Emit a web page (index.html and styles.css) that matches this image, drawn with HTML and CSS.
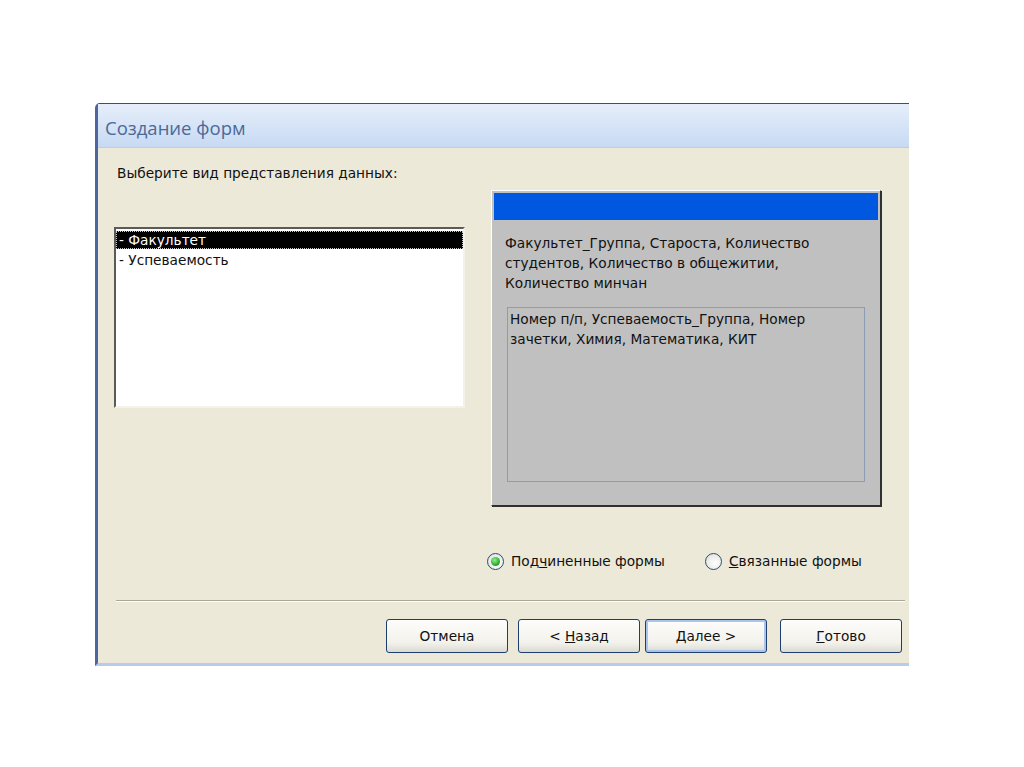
FILE: index.html
```html
<!DOCTYPE html>
<html lang="ru">
<head>
    <meta charset="UTF-8">
    <title>Создание форм</title>
    <link rel="stylesheet" href="styles.css">
</head>
<body>
    <div class="window">
        <div class="titlebar">Создание форм</div>
        <div class="dialog">
            <p class="prompt">Выберите вид представления данных:</p>

            <div class="content">
                <div class="listbox">
                    <div class="list-item selected">- Факультет</div>
                    <div class="list-item">- Успеваемость</div>
                </div>

                <div class="preview">
                    <div class="preview-bar"></div>
                    <p class="preview-main">Факультет_Группа, Староста, Количество студентов, Количество в общежитии, Количество минчан</p>
                    <div class="preview-sub">Номер п/п, Успеваемость_Группа, Номер зачетки, Химия, Математика, КИТ</div>
                </div>
            </div>

            <div class="options">
                <label class="radio checked"><span class="dot"></span>Под<u>ч</u>иненные формы</label>
                <label class="radio"><span class="dot"></span><u>С</u>вязанные формы</label>
            </div>

            <div class="separator"></div>

            <div class="buttons">
                <button class="btn">Отмена</button>
                <button class="btn">&lt; <u>Н</u>азад</button>
                <button class="btn default"><u>Д</u>алее &gt;</button>
                <button class="btn"><u>Г</u>отово</button>
            </div>
        </div>
    </div>
</body>
</html>
```

FILE: styles.css
```css
body {
    margin: 0;
    background: #ffffff;
    font-family: "DejaVu Sans", Tahoma, sans-serif;
    font-size: 13.7px;
    color: #111;
}

.window {
    margin: 103px 0 0 95px;
    width: 811px;
    border-left: 3px solid #4d66a0;
    border-top: 1px solid #3b4d78;
    border-bottom: 3px solid #b7cbea;
    border-top-left-radius: 5px;
    background: #ece9d8;
}

.titlebar {
    height: 43px;
    padding-left: 7px;
    line-height: 48px;
    font-family: "Open Sans", "DejaVu Sans", sans-serif;
    font-size: 18.5px;
    color: #4b6a98;
    background: linear-gradient(#e6eefa, #d3e2f6 60%, #c7daf3);
    border-bottom: 1px solid #b9cdec;
}

.dialog {
    padding: 17px 7px 10px 16px;
}

.prompt {
    margin: 0 0 0 3px;
    height: 16px;
    line-height: 16px;
}

.content {
    display: flex;
    align-items: flex-start;
    margin-top: 9px;
}

/* list of tables */
.listbox {
    margin-top: 37px;
    width: 347px;
    height: 175px;
    padding-top: 2px;
    background: #fff;
    border: 2px solid;
    border-color: #5a5a5a #f2f1ea #f2f1ea #5a5a5a;
}

.list-item {
    height: 18px;
    line-height: 18px;
    padding-left: 3px;
    margin-bottom: 2px;
}

.list-item.selected {
    background: #000;
    color: #fff;
    outline: 1px dotted #c8c8c8;
    outline-offset: -1px;
}

/* preview of the form */
.preview {
    margin-left: 26px;
    width: 384px;
    height: 310px;
    padding: 2px;
    background: #c0c0c0;
    border: 1px solid;
    border-color: #ffffff #303030 #303030 #ffffff;
    box-shadow: 1px 1px 0 #303030;
}

.preview-bar {
    height: 27px;
    background: #0058e0;
}

.preview-main {
    margin: 13px 0 0 11px;
    line-height: 20px;
    width: 345px;
}

.preview-sub {
    margin: 14px 0 0 13px;
    width: 352px;
    height: 171px;
    padding: 1px 2px;
    line-height: 20px;
    border: 1px solid #8c9cb6;
}

/* radio buttons */
.options {
    display: flex;
    align-items: center;
    margin: 46px 0 0 373px;
    height: 18px;
}

.radio {
    display: flex;
    align-items: center;
    margin-right: 40px;
}

.dot {
    width: 15px;
    height: 15px;
    margin-right: 7px;
    border: 1px solid #1c5180;
    border-radius: 50%;
    background: radial-gradient(circle at 60% 60%, #ffffff, #dcdcd6);
    position: relative;
}

.radio.checked .dot::after {
    content: "";
    position: absolute;
    left: 3px;
    top: 3px;
    width: 9px;
    height: 9px;
    border-radius: 50%;
    background: radial-gradient(circle at 40% 35%, #8ef08e, #21a121 70%);
}

.separator {
    margin: 30px 0 0 2px;
    height: 1px;
    width: 789px;
    background: #aca899;
    border-bottom: 1px solid #fff;
}

/* dialog buttons */
.buttons {
    display: flex;
    justify-content: flex-end;
    margin-top: 17px;
}

.btn {
    width: 122px;
    height: 34px;
    margin-left: 10px;
    font-family: "DejaVu Sans", Tahoma, sans-serif;
    font-size: 13.7px;
    color: #111;
    border: 1px solid #1e3f6e;
    border-radius: 3px;
    background: linear-gradient(#fdfdfb, #f3f2ec 70%, #dcdbd2);
}

.btn:nth-child(3) {
    margin-left: 5px;
}

.btn:nth-child(4) {
    margin-left: 13px;
}

.btn.default {
    box-shadow: inset 0 0 0 2px #a9c4ee;
}
```
